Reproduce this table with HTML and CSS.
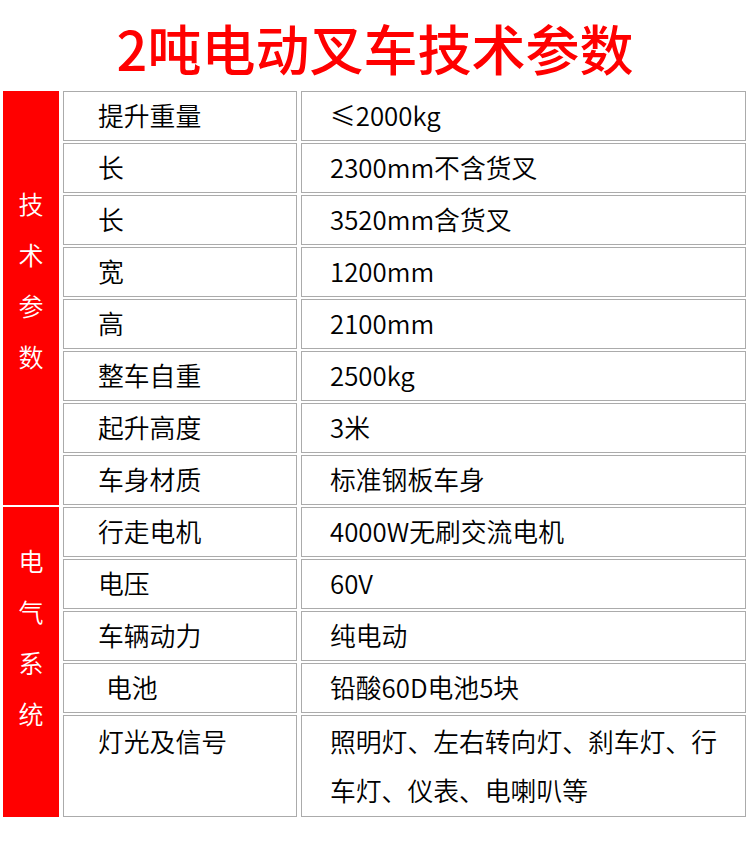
FILE: index.html
```html
<!DOCTYPE html>
<html lang="zh-CN">
<head>
<meta charset="utf-8">
<title>2吨电动叉车技术参数</title>
<link rel="stylesheet" href="styles.css">
</head>
<body>
<h1 class="title">2吨电动叉车技术参数</h1>
<div class="spec">
  <div class="group group-a"><span>技</span><span>术</span><span>参</span><span>数</span></div>
  <div class="cell label">提升重量</div><div class="cell value">≤2000kg</div>
  <div class="cell label">长</div><div class="cell value">2300mm不含货叉</div>
  <div class="cell label">长</div><div class="cell value">3520mm含货叉</div>
  <div class="cell label">宽</div><div class="cell value">1200mm</div>
  <div class="cell label">高</div><div class="cell value">2100mm</div>
  <div class="cell label">整车自重</div><div class="cell value">2500kg</div>
  <div class="cell label">起升高度</div><div class="cell value">3米</div>
  <div class="cell label">车身材质</div><div class="cell value">标准钢板车身</div>
  <div class="group group-b"><span>电</span><span>气</span><span>系</span><span>统</span></div>
  <div class="cell label">行走电机</div><div class="cell value">4000W无刷交流电机</div>
  <div class="cell label">电压</div><div class="cell value">60V</div>
  <div class="cell label">车辆动力</div><div class="cell value">纯电动</div>
  <div class="cell label indent">电池</div><div class="cell value">铅酸60D电池5块</div>
  <div class="cell label tall">灯光及信号</div><div class="cell value tall">照明灯、左右转向灯、刹车灯、行车灯、仪表、电喇叭等</div>
</div>
</body>
</html>
```
FILE: styles.css
```css
html, body {
  margin: 0;
  padding: 0;
  background: #ffffff;
}
body {
  width: 750px;
  font-family: "Noto Sans CJK SC", "Noto Sans", sans-serif;
  color: #000000;
}
.title {
  margin: 0;
  padding-top: 21px;
  height: 70px;
  line-height: 54px;
  font-size: 54px;
  font-weight: 500;
  color: #ff0000;
  text-align: center;
}
.spec {
  display: grid;
  grid-template-columns: 56px 234px 445px;
  grid-auto-rows: 50px;
  column-gap: 4px;
  row-gap: 2px;
  padding-left: 3px;
}
.group {
  background: #ff0000;
  color: #ffffff;
  display: flex;
  flex-direction: column;
  align-items: center;
  font-size: 25px;
  font-weight: 350;
  line-height: 51px;
}
.group-a {
  grid-column: 1;
  grid-row: 1 / span 8;
  padding-top: 87px;
}
.group-b {
  grid-column: 1;
  grid-row: 9 / span 6;
  padding-top: 28px;
}
.cell {
  border: 1px solid #ababab;
  font-size: 25.8px;
  font-weight: 350;
  line-height: 46px;
  box-sizing: border-box;
}
.label {
  grid-column: 2;
  padding-left: 34px;
}
.label.indent {
  padding-left: 42px;
}
.value {
  grid-column: 3;
  padding-left: 28px;
  padding-right: 12px;
}
.tall {
  grid-row: span 2;
  line-height: 49px;
}
```
